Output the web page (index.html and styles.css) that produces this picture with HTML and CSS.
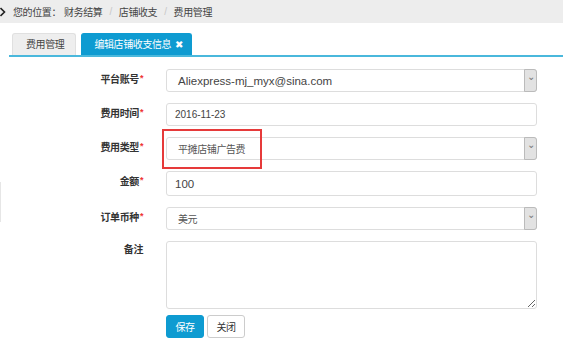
FILE: index.html
```html
<!DOCTYPE html>
<html lang="zh-CN">
<head>
  <meta charset="UTF-8">
  <meta name="viewport" content="width=device-width,initial-scale=1.0">
  <title>编辑店铺收支信息</title>
  <link rel="stylesheet" href="styles.css">
</head>
<body>
  <!-- 面包屑 -->
  <div class="crumb">
    <svg class="crumb-icon" width="6" height="10" viewBox="0 0 6 10"><polyline points="0.5,1 4.5,5 0.5,9" fill="none" stroke="#222" stroke-width="1.6"/></svg>
    <span class="crumb-here">您的位置：</span>
    <span>财务结算</span><span class="sep">/</span>
    <span>店铺收支</span><span class="sep">/</span>
    <span>费用管理</span>
  </div>

  <!-- 标签页 -->
  <div class="tabs">
    <div class="tab">费用管理</div>
    <div class="tab active">编辑店铺收支信息 <span class="tab-close">✖</span></div>
  </div>

  <div class="side-line"></div>

  <!-- 表单 -->
  <form class="edit-form">
    <div class="row">
      <label>平台账号<i>*</i></label>
      <div class="select"><span class="latin">Aliexpress-mj_myx@sina.com</span><b class="arrow">⌄</b></div>
    </div>
    <div class="row">
      <label>费用时间<i>*</i></label>
      <div class="input date">2016-11-23</div>
    </div>
    <div class="row mark">
      <label>费用类型<i>*</i></label>
      <div class="select"><span>平摊店铺广告费</span><b class="arrow">⌄</b></div>
      <div class="highlight"></div>
    </div>
    <div class="row">
      <label>金额<i>*</i></label>
      <div class="input tall">100</div>
    </div>
    <div class="row">
      <label>订单币种<i>*</i></label>
      <div class="select"><span>美元</span><b class="arrow">⌄</b></div>
    </div>
    <div class="row note-row">
      <label>备注</label>
      <textarea class="note"></textarea>
    </div>
    <div class="row actions">
      <button type="button" class="btn primary">保存</button>
      <button type="button" class="btn">关闭</button>
    </div>
  </form>
</body>
</html>
```

FILE: styles.css
```css
body { margin: 0; background: #fff; font-family: "Liberation Sans", "Noto Sans CJK SC", sans-serif; font-size: 10px; letter-spacing: -0.4px; color: #333; }
.crumb { height: 23px; background: #ededed; display: flex; align-items: center; color: #444; }
.crumb-icon { margin: 0 7px 0 0; }
.crumb-here { margin-right: 3px; }
.crumb .sep { color: #c8c8c8; margin: 0 7px; }

.tabs { display: flex; align-items: flex-end; margin: 10px 0 0 9px; padding-left: 3px; height: 22px; border-bottom: 2px solid #4ab8dc; }
.tab { height: 22px; line-height: 21px; box-sizing: border-box; padding: 0 11px 0 13px; background: #eee; border: 1px solid #e0e0e0; border-bottom: none; border-radius: 3px 3px 0 0; color: #444; }
.tab.active { margin-left: 5px; width: 111px; padding: 0 0 0 12px; background: #0e9bd1; border-color: #0e9bd1; color: #fff; }
.tab-close { font-size: 10px; margin-left: 1px; }

.side-line { position: absolute; left: 0; top: 182px; width: 1px; height: 40px; background: #e6e6e6; }

.edit-form { padding-top: 12px; }
.row { display: flex; align-items: flex-start; margin-bottom: 11px; position: relative; }
.row label { width: 143px; text-align: right; font-weight: bold; color: #333; padding-top: 5px; padding-right: 23px; line-height: 12px; }
.row label i { color: #e33; font-style: normal; font-size: 9px; vertical-align: top; position: relative; top: -2px; margin-left: 1px; }

.select, .input { width: 371px; height: 23px; box-sizing: border-box; border: 1px solid #ddd; border-radius: 3px; display: flex; align-items: center; color: #444; }
.select span { flex: 1; padding-left: 11px; color: #555; }
.select .latin { font-size: 11.5px; letter-spacing: 0; color: #444; }
.select .arrow { width: 11px; align-self: stretch; margin: -1px -1px -1px 0; background: #e2e2e2; border: 1px solid #bbb; border-radius: 0 3px 3px 0; color: #777; font-weight: normal; font-size: 10px; text-align: center; line-height: 14px; }
.input { padding-left: 8px; }
.input.date { font-size: 10px; letter-spacing: 0; }
.input.tall { height: 25px; font-size: 11.5px; letter-spacing: 0; }

.mark { margin-top: 1px; }
.highlight { position: absolute; left: 162px; top: -8px; width: 100px; height: 40px; box-sizing: border-box; border: 2px solid #e63a3a; }

.note-row { margin-top: 4px; }
.note-row label { padding-top: 3px; }
.note { width: 371px; height: 68px; box-sizing: border-box; border: 1px solid #ddd; border-radius: 3px; margin: 0; font-family: inherit; }
.actions { padding-left: 166px; margin-top: -5px; gap: 3px; }
.btn { width: 38px; height: 23px; padding: 0; border: 1px solid #ccc; border-radius: 3px; background: #fff; color: #333; font-family: inherit; font-size: 10px; letter-spacing: -0.4px; }
.btn.primary { background: #0e9bd1; border-color: #0e9bd1; color: #fff; }
```
